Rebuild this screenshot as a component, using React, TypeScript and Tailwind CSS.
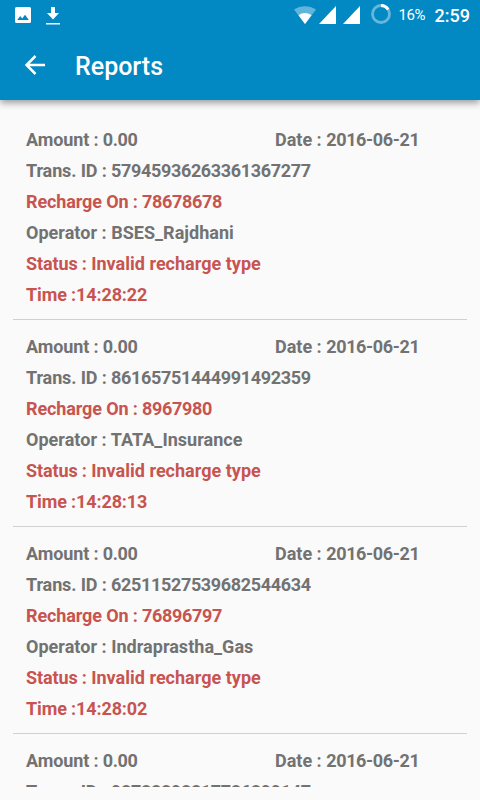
type Report = {
  amount: string;
  date: string;
  transId: string;
  rechargeOn: string;
  operator: string;
  status: string;
  time: string;
};

const reports: Report[] = [
  {
    amount: "0.00",
    date: "2016-06-21",
    transId: "57945936263361367277",
    rechargeOn: "78678678",
    operator: "BSES_Rajdhani",
    status: "Invalid recharge type",
    time: "14:28:22",
  },
  {
    amount: "0.00",
    date: "2016-06-21",
    transId: "86165751444991492359",
    rechargeOn: "8967980",
    operator: "TATA_Insurance",
    status: "Invalid recharge type",
    time: "14:28:13",
  },
  {
    amount: "0.00",
    date: "2016-06-21",
    transId: "62511527539682544634",
    rechargeOn: "76896797",
    operator: "Indraprastha_Gas",
    status: "Invalid recharge type",
    time: "14:28:02",
  },
  {
    amount: "0.00",
    date: "2016-06-21",
    transId: "98788898817786899147",
    rechargeOn: "78678678",
    operator: "BSES_Rajdhani",
    status: "Invalid recharge type",
    time: "14:27:51",
  },
];

function SignalIcon() {
  return (
    <svg className="h-[18px] w-[17px]" viewBox="0 0 17 18" fill="currentColor">
      <path d="M0 18 17 0v18z" />
    </svg>
  );
}

function StatusBar() {
  return (
    <div className="flex h-[30px] items-center pr-[10px] pl-[15px]">
      <svg className="h-4 w-4" viewBox="0 0 16 16" fill="currentColor">
        <path
          fillRule="evenodd"
          d="M1.500 0h13A1.500 1.500 0 0 1 16 1.500v13a1.500 1.500 0 0 1-1.500 1.500h-13A1.500 1.500 0 0 1 0 14.500v-13A1.500 1.500 0 0 1 1.500 0zM2.200 13h11.600L10 7.800 7.200 11.400 5.200 9z"
        />
      </svg>
      <svg className="ml-[15px] h-[19px] w-[14px]" viewBox="0 0 14 19" fill="currentColor">
        <path d="M5 1h4v6h4l-6 6.500L1 7h4zM0 17h14v1.500H0z" />
      </svg>
      <div className="ml-auto flex items-center">
        <svg className="h-[18px] w-[22px]" viewBox="0 0 22 18" fill="currentColor">
          <path opacity=".38" d="M0 3.500C6.500-1 15.500-1 22 3.500L11 18z" />
          <path d="M4.500 9.200c4-3 9-3 13 0L11 18z" />
        </svg>
        <div className="ml-[3px] flex gap-[7px]">
          <SignalIcon />
          <SignalIcon />
        </div>
        <svg
          className="mb-[2px] ml-[11px] h-5 w-5"
          viewBox="0 0 20 20"
          fill="none"
          stroke="currentColor"
          strokeWidth="2.800"
        >
          <circle cx="10" cy="10" r="8.500" opacity=".4" />
          <path d="M10 1.500a8.500 8.500 0 0 1 7.200 4" />
        </svg>
        <span className="ml-2 w-9 text-[15px] tracking-[-0.5px]">16%</span>
        <span className="mt-[2px] text-lg leading-none font-medium">2:59</span>
      </div>
    </div>
  );
}

function AppBar() {
  return (
    <div className="flex h-[70px] items-center pl-[25px]">
      <svg className="h-5 w-5" viewBox="0 0 20 20" fill="none" stroke="currentColor" strokeWidth="2.500">
        <path d="M20 10H2M10.500 1 1.500 10l9 9" />
      </svg>
      <h1 className="mt-1 ml-[30px] text-[25px] font-medium">Reports</h1>
    </div>
  );
}

function Digits({ children }: { children: string }) {
  return <span className="tracking-[-0.35px]">{children}</span>;
}

function ReportItem({ report }: { report: Report }) {
  return (
    <li className="h-[207px] shrink-0 border-b border-[#d0d0d0] px-[13px] pt-[11px] text-lg leading-[31px] font-bold tracking-[-0.12px] whitespace-nowrap text-[#727272]">
      <div className="flex">
        <p className="w-[249px]">
          Amount : <Digits>{report.amount}</Digits>
        </p>
        <p className="tracking-normal">
          Date : <Digits>{report.date}</Digits>
        </p>
      </div>
      <p>
        Trans. ID : <Digits>{report.transId}</Digits>
      </p>
      <p className="text-[#c75450]">
        Recharge On : <Digits>{report.rechargeOn}</Digits>
      </p>
      <p className="tracking-[0.03px]">Operator : {report.operator}</p>
      <p className="text-[#c75450]">
        Status : <span className="tracking-[0.02px]">{report.status}</span>
      </p>
      <p className="text-[#c75450]">Time :{report.time}</p>
    </li>
  );
}

export default function App() {
  return (
    <div className="flex h-[800px] w-[480px] flex-col overflow-hidden bg-[#fafafa] font-['Roboto',sans-serif]">
      <header className="z-10 h-[100px] shrink-0 bg-[#0288c3] text-white shadow-[0_3px_7px_rgba(0,0,0,0.38)]">
        <StatusBar />
        <AppBar />
      </header>
      <main className="min-h-0 flex-1 p-[13px]">
        <ul className="flex h-full flex-col overflow-hidden">
          {reports.map((report) => (
            <ReportItem key={report.transId} report={report} />
          ))}
        </ul>
      </main>
    </div>
  );
}
